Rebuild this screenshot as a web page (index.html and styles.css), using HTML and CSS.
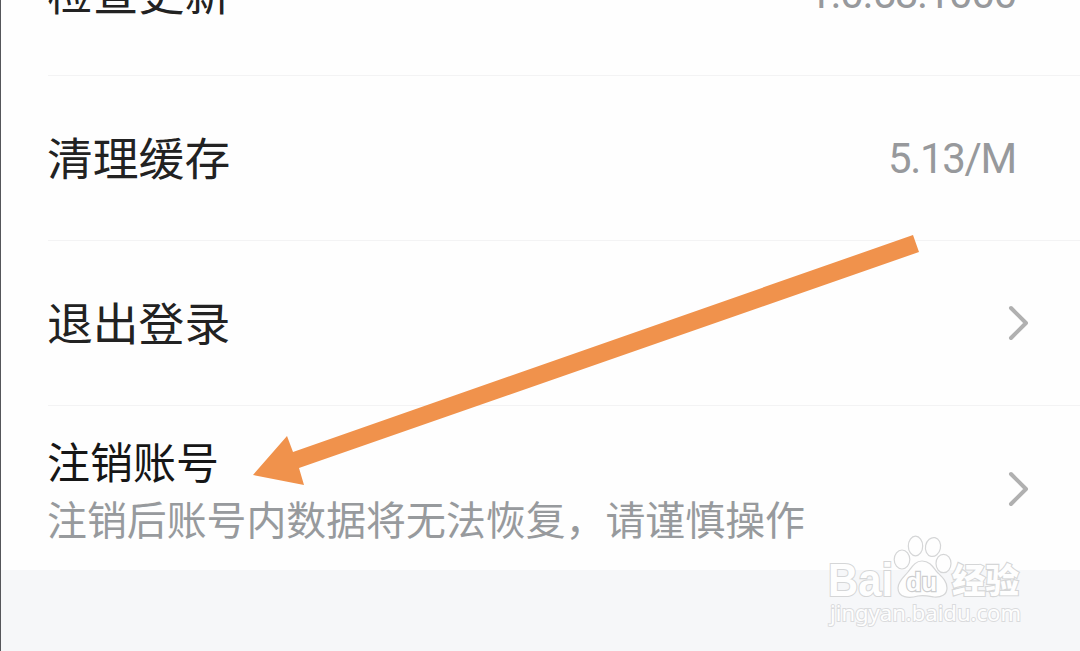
FILE: index.html
```html
<!DOCTYPE html>
<html lang="zh-CN">

<head>
    <meta charset="UTF-8">
    <meta name="viewport" content="width=device-width, initial-scale=1.0">
    <title>设置</title>
    <link rel="stylesheet" href="styles.css">
</head>

<body>
    <div class="page">
        <div class="list">
            <div class="row">
                <span class="title">检查更新</span>
                <span class="value">1.0.58.1000</span>
            </div>
            <div class="row">
                <span class="title">清理缓存</span>
                <span class="value">5.13/M</span>
            </div>
            <div class="row">
                <span class="title">退出登录</span>
                <svg class="chevron" width="24" height="38" viewBox="0 0 24 38">
                    <path d="M4 4 L19 19 L4 34" />
                </svg>
            </div>
            <div class="row">
                <div class="account">
                    <span class="account-title">注销账号</span>
                    <span class="desc">注销后账号内数据将无法恢复，请谨慎操作</span>
                </div>
                <svg class="chevron" width="24" height="38" viewBox="0 0 24 38">
                    <path d="M4 4 L19 19 L4 34" />
                </svg>
            </div>
        </div>

        <!-- arrow pointing at the account row -->
        <svg class="arrow" width="1080" height="651" viewBox="0 0 1080 651">
            <path d="M913 235 L919 252 L299 468 L304 485 L253 475 L287 436 L293 452 Z" />
        </svg>

        <svg class="watermark" width="220" height="110" viewBox="820 530 220 110">
            <text class="wm-name" x="828" y="596" textLength="65" lengthAdjust="spacingAndGlyphs">Bai</text>
            <ellipse cx="902" cy="559.500" rx="7.800" ry="9.500" />
            <ellipse cx="915.500" cy="546" rx="7.200" ry="9.800" />
            <ellipse cx="933" cy="547" rx="7.500" ry="9.500" transform="rotate(12 933 547)" />
            <ellipse cx="943.500" cy="563.500" rx="7.500" ry="9.200" />
            <path d="M922 561 C930 561 933 567 937 572 C942 577 947 581 947 588 C947 595 941 597.500 934 597 C928 596 924 595 918 596 C909 598.500 898 598 898 588 C898 581 904 577 908 572 C912 567 915 561 922 561 Z" />
            <text class="wm-du" x="906" y="591" textLength="31" lengthAdjust="spacingAndGlyphs">du</text>
            <text class="wm-cn" x="952" y="593" textLength="67" lengthAdjust="spacingAndGlyphs">经验</text>
            <text class="wm-url" x="830" y="621" textLength="191" lengthAdjust="spacingAndGlyphs">jingyan.baidu.com</text>
        </svg>
    </div>
</body>

</html>
```
FILE: styles.css
```css
body {
    margin: 0;
    background-color: #f6f7f9;
    font-family: "Noto Sans CJK SC", sans-serif;
}

.page {
    position: relative;
    box-sizing: border-box;
    height: 651px;
    overflow: hidden;
    border-left: 1px solid #55565a;
}

.list {
    margin-top: -89px;
    padding-left: 47px;
    background-color: #fefefe;
}

.row {
    display: flex;
    align-items: center;
    justify-content: space-between;
    box-sizing: border-box;
    height: 165px;
    padding-right: 49px;
    border-bottom: 1px solid #f3f3f4;
}

.row:last-child {
    height: 164px;
    border-bottom: none;
}

.title {
    margin-left: -1px;
    padding-bottom: 4px;
    font-size: 45.8px;
    line-height: 60px;
    color: #222;
}

.value {
    padding-top: 2px;
    padding-right: 15px;
    font-family: Roboto, sans-serif;
    font-size: 42px;
    line-height: 50px;
    letter-spacing: -1.3px;
    color: #97999c;
}

.account {
    display: flex;
    flex-direction: column;
    margin-left: -1px;
    padding-top: 1px;
}

.account-title {
    font-size: 43px;
    line-height: 56px;
    color: #161616;
}

.desc {
    padding-top: 2px;
    font-size: 39.9px;
    line-height: 56px;
    color: #979a9d;
}

.chevron path {
    fill: none;
    stroke: #b0b0b0;
    stroke-width: 4;
    stroke-linecap: round;
    stroke-linejoin: round;
}

.row:last-child .chevron {
    padding-top: 1px;
}

.arrow {
    position: absolute;
    top: 0;
    left: -1px;
}

.arrow path {
    fill: #f0924c;
}

.watermark {
    position: absolute;
    top: 530px;
    left: 819px;
    fill: #fefefe;
    stroke: #d5d6d7;
    stroke-width: 1.2;
}

.watermark text {
    paint-order: stroke;
    stroke-width: 2.2;
}

.wm-name {
    font-family: "Liberation Sans", sans-serif;
    font-size: 46px;
    font-weight: bold;
}

.watermark .wm-du {
    font-family: "Liberation Sans", sans-serif;
    font-size: 26px;
    font-weight: bold;
    stroke: #cccdce;
    stroke-width: 2.4;
}

.wm-cn {
    font-size: 34px;
    font-weight: 900;
}

.watermark .wm-url {
    font-family: "Noto Sans", sans-serif;
    font-size: 22px;
    stroke: #dadbdd;
    stroke-width: 1.9;
}
```
